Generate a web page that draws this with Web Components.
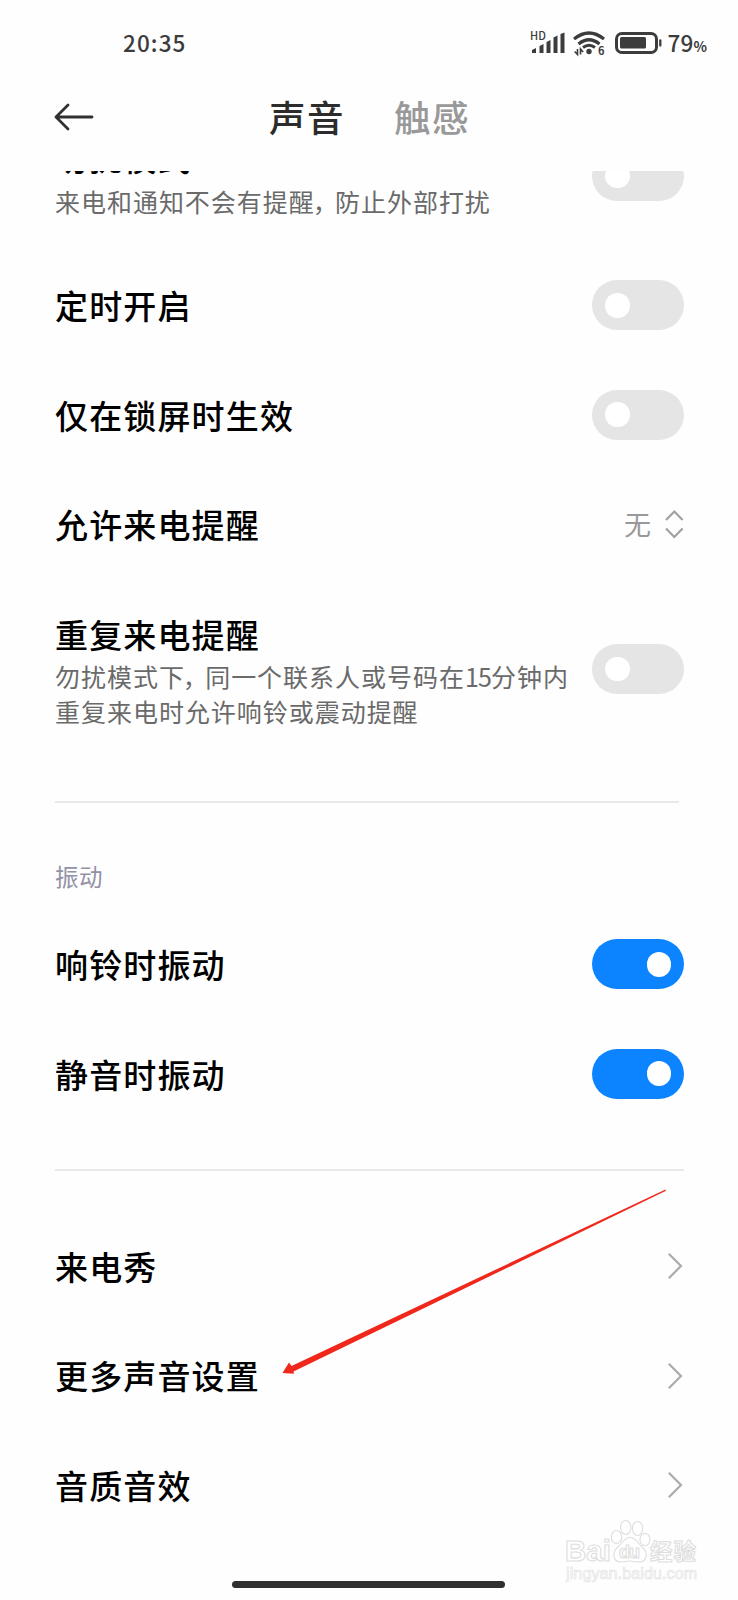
<!DOCTYPE html>
<html lang="zh-CN">
<head>
<meta charset="UTF-8">
<title>声音</title>
<style>
    html, body{
        margin:0;
        background:#fefefe;
        font-family:"Noto Sans CJK SC", "Noto Sans", sans-serif;
    }
</style>
</head>
<body>
<sound-settings></sound-settings>
<script>
class BaseElement extends HTMLElement{
    constructor(){
        super();
        this.attachShadow({mode:'open'});
    }
    connectedCallback(){
        const template = document.createElement('template');
        template.innerHTML = this.getTemplate();
        this.shadowRoot.appendChild(template.content.cloneNode(true));
    }
}

class StatusBar extends BaseElement{
    getTemplate(){
        return `
        <style>
            :host{
                display:flex;
                align-items:center;
                justify-content:space-between;
                box-sizing:border-box;
                height:86px;
                padding:0 31px 0 123px;
                color:#3c3c3c;
                font-weight:500;
            }
            .time{
                padding-bottom:3px;
                font-size:22.5px;
                letter-spacing:1.1px;
            }
            .right{
                display:flex;
                align-items:center;
            }
            svg{
                display:block;
            }
            .level{
                margin-left:5px;
                padding-bottom:2px;
                font-size:22.5px;
                letter-spacing:.2px;
            }
            .level small{
                font-size:14px;
                font-weight:700;
                letter-spacing:0;
            }
        </style>
        <span class="time">20:35</span>
        <div class="right">
            <svg width="134" height="34" viewBox="528 26 134 34" fill="none" stroke="#3c3c3c">
                <text x="530" y="39.5" font-size="11" font-weight="500" fill="#3c3c3c" stroke="none">HD</text>
                <g fill="#3c3c3c" stroke="none">
                    <path d="M532 50l4-2v5h-4zM539.5 46l4-2v9h-4zM546.5 42l4-2v13h-4zM553.5 37.5l4-2V53h-4zM560.5 34l4-1.5V53h-4z"/>
                    <circle cx="589" cy="51.500" r="2.700"/>
                </g>
                <path stroke-width="3.2" d="M574 39q15-12 30 0M578.5 44q10.500-8.500 21 0"/>
                <path stroke-width="3" d="M583 47.500q6-4.500 12 0"/>
                <path stroke-width="1.600" d="M577.500 49v5.500l-2.800-3M580.500 54.500V49l2.600 3"/>
                <text x="598" y="55" font-size="11" font-weight="700" fill="#3c3c3c" stroke="none">6</text>
                <rect x="616.500" y="33.500" width="40" height="19" rx="5.500" stroke-width="3"/>
                <rect x="620" y="37" width="26" height="11.500" rx="1.500" fill="#3c3c3c" stroke="none"/>
                <path stroke-width="2.300" stroke-linecap="round" d="M660.300 40.500v5"/>
            </svg>
            <span class="level">79<small>%</small></span>
        </div>
        `
    }
}
customElements.define('status-bar', StatusBar)

class TabHeader extends BaseElement{
    getTemplate(){
        return `
        <style>
            :host{
                display:flex;
                align-items:center;
                box-sizing:border-box;
                height:85px;
                padding:0 0 23px 54px;
                font-size:36.5px;
                line-height:50px;
                letter-spacing:1.5px;
                font-weight:500;
            }
            svg{
                margin-right:175px;
            }
            .active{
                color:#2c2c2c;
                margin-right:49px;
            }
            .other{
                color:#999;
            }
        </style>
        <svg width="40" height="30" viewBox="0 0 40 30" fill="none" stroke="#303030" stroke-width="2.800" stroke-linecap="round" stroke-linejoin="round">
            <path d="M38 15H2M14 3L2 15l12 12"/>
        </svg>
        <span class="active">声音</span>
        <span class="other">触感</span>
        `
    }
}
customElements.define('tab-header', TabHeader)

class ToggleSwitch extends BaseElement{
    getTemplate(){
        return `
        <style>
            :host{
                display:flex;
                align-items:center;
                box-sizing:border-box;
                width:92px;
                height:50px;
                padding:0 13px;
                border-radius:25px;
                background:#e5e5e5;
            }
            :host([checked]){
                justify-content:flex-end;
                background:#0d84ff;
            }
            .knob{
                width:24.5px;
                height:24.5px;
                border-radius:50%;
                background:#fff;
            }
        </style>
        <div class="knob"></div>
        `
    }
}
customElements.define('toggle-switch', ToggleSwitch)

class ArrowIcon extends BaseElement{
    getTemplate(){
        const updown = this.getAttribute('type') === 'updown';
        return `
        <style>
            :host{
                display:block;
                margin:${updown ? '0' : '1px 1px 0 0'};
            }
            svg{
                display:block;
            }
        </style>
        ${updown
            ? `<svg width="20" height="30" viewBox="0 0 20 30" fill="none" stroke="#a0a0a0" stroke-width="2.200"><path d="M2 11l8.300-8.500L18.600 11M2 19.500l8.300 8.500 8.300-8.500"/></svg>`
            : `<svg width="16" height="28" viewBox="0 0 16 28" fill="none" stroke="#ababab" stroke-width="2.200"><path d="M1.800 1.800L14 14 1.800 26.200"/></svg>`}
        `
    }
}
customElements.define('arrow-icon', ArrowIcon)

class SettingRow extends BaseElement{
    getTemplate(){
        return `
        <style>
            :host{
                display:flex;
                align-items:center;
                justify-content:space-between;
                padding:29.65px 54px 29.65px 55px;
            }
            .title{
                font-size:33px;
                line-height:50px;
                letter-spacing:1.15px;
                font-weight:500;
                color:#000;
            }
            ::slotted([slot=summary]){
                display:block;
                margin-top:var(--summary-gap, 0);
                font-size:25px;
                line-height:35px;
                letter-spacing:.97px;
                color:#6a6a6a;
                white-space:nowrap;
            }
            .action{
                display:flex;
                align-items:center;
                gap:13px;
                font-size:27px;
                line-height:40px;
                color:#999;
            }
        </style>
        <div>
            <div class="title"><slot></slot></div>
            <slot name="summary"></slot>
        </div>
        <div class="action"><slot name="action"></slot></div>
        `
    }
}
customElements.define('setting-row', SettingRow)

class SettingGroup extends BaseElement{
    getTemplate(){
        const label = this.getAttribute('label');
        return `
        <style>
            :host{
                display:block;
            }
            .label{
                padding-left:55px;
                font-size:23.5px;
                line-height:34px;
                letter-spacing:.6px;
                color:#9292a6;
            }
        </style>
        ${label ? `<div class="label">${label}</div>` : ''}
        <slot></slot>
        `
    }
}
customElements.define('setting-group', SettingGroup)

// red pointer drawn over the list
class PointerArrow extends BaseElement{
    getTemplate(){
        return `
        <style>
            :host{
                position:absolute;
                left:275px;
                top:1185px;
            }
            svg{
                display:block;
            }
        </style>
        <svg width="396" height="196" viewBox="275 1185 396 196" fill="#f0281c">
            <path d="M282.500 1373L289 1362.500 291.500 1366 665.500 1189.500 666 1190.700 293.500 1371.500 294 1373.800z"/>
        </svg>
        `
    }
}
customElements.define('pointer-arrow', PointerArrow)

class WaterMark extends BaseElement{
    getTemplate(){
        return `
        <style>
            :host{
                position:absolute;
                left:560px;
                top:1515px;
            }
            svg{
                display:block;
            }
        </style>
        <svg width="145" height="70" viewBox="560 1515 145 70" fill="#fff" stroke="#dedede" stroke-width="1.100">
            <g font-weight="700">
                <text x="565" y="1561" font-size="29" font-family="Liberation Sans, sans-serif" textLength="46" lengthAdjust="spacingAndGlyphs">Bai</text>
                <text x="650" y="1560" font-size="22.500" textLength="46">经验</text>
            </g>
            <ellipse cx="616.500" cy="1537" rx="5.200" ry="6.500"/>
            <ellipse cx="625.700" cy="1527.500" rx="5.200" ry="7"/>
            <ellipse cx="637.500" cy="1528.500" rx="5.200" ry="7"/>
            <ellipse cx="645" cy="1539.500" rx="5" ry="6.200"/>
            <path d="M630 1537.500c6 0 8 6 12 9.500 6 5 6 15-3 15-4 0-5-1-9-1s-6 1-9 1c-9 0-9-10-3-15 4-3.500 6-9.500 12-9.500z"/>
            <text x="619" y="1558" font-size="18" font-family="Liberation Sans, sans-serif" font-weight="700" textLength="21">du</text>
            <text x="566" y="1579" font-size="16" font-family="Liberation Sans, sans-serif" stroke="#e4e4e4" stroke-width=".7" textLength="131">jingyan.baidu.com</text>
        </svg>
        `
    }
}
customElements.define('water-mark', WaterMark)

class SoundSettings extends BaseElement{
    getTemplate(){
        return `
        <style>
            :host{
                display:flex;
                flex-direction:column;
                position:relative;
                width:738px;
                height:1600px;
                overflow:hidden;
            }
            main{
                flex:1;
                overflow:hidden;
            }
            /* list is scrolled a little, first title goes under the header */
            .list{
                margin-top:-69px;
            }
            .first{
                --summary-gap:2px;
                padding-bottom:32px;
            }
            .first toggle-switch{
                margin-top:2px;
            }
            .comma{
                letter-spacing:-4.7px;
            }
            .summary-comma{
                margin-left:-2px;
                margin-right:2px;
            }
            .num{
                letter-spacing:-.8px;
            }
            hr{
                height:2px;
                margin:0 54px 0 55px;
                border:0;
                background:#e9e9e9;
            }
            .home{
                flex:none;
                width:273px;
                height:7px;
                margin:0 0 12px 232px;
                border-radius:4px;
                background:#303030;
            }
        </style>
        <status-bar></status-bar>
        <tab-header></tab-header>
        <main>
            <div class="list">
                <setting-group>
                    <setting-row class="first">勿扰模式
                        <span slot="summary">来电和通知不会有提醒<span class="comma summary-comma">，</span>防止外部打扰</span>
                        <toggle-switch slot="action"></toggle-switch>
                    </setting-row>
                    <setting-row>定时开启<toggle-switch slot="action"></toggle-switch></setting-row>
                    <setting-row>仅在锁屏时生效<toggle-switch slot="action"></toggle-switch></setting-row>
                    <setting-row>允许来电提醒
                        <span slot="action">无</span>
                        <arrow-icon slot="action" type="updown"></arrow-icon>
                    </setting-row>
                    <setting-row style="margin-top:1px">重复来电提醒
                        <span slot="summary">勿扰模式下<span class="comma summary-comma">，</span>同一个联系人或号码在<span class="num">15</span>分钟内<br>重复来电时允许响铃或震动提醒</span>
                        <toggle-switch slot="action"></toggle-switch>
                    </setting-row>
                </setting-group>
                <hr style="margin-top:42px; margin-right:59px">
                <setting-group label="振动" style="margin-top:56px; margin-bottom:41px">
                    <setting-row style="margin-top:17px">响铃时振动<toggle-switch slot="action" checked></toggle-switch></setting-row>
                    <setting-row>静音时振动<toggle-switch slot="action" checked></toggle-switch></setting-row>
                </setting-group>
                <hr>
                <setting-group style="margin-top:40px">
                    <setting-row>来电秀<arrow-icon slot="action"></arrow-icon></setting-row>
                    <setting-row>更多声音设置<arrow-icon slot="action"></arrow-icon></setting-row>
                    <setting-row>音质音效<arrow-icon slot="action"></arrow-icon></setting-row>
                </setting-group>
            </div>
        </main>
        <div class="home"></div>
        <pointer-arrow></pointer-arrow>
        <water-mark></water-mark>
        `
    }
}
customElements.define('sound-settings', SoundSettings)
</script>
</body>
</html>
